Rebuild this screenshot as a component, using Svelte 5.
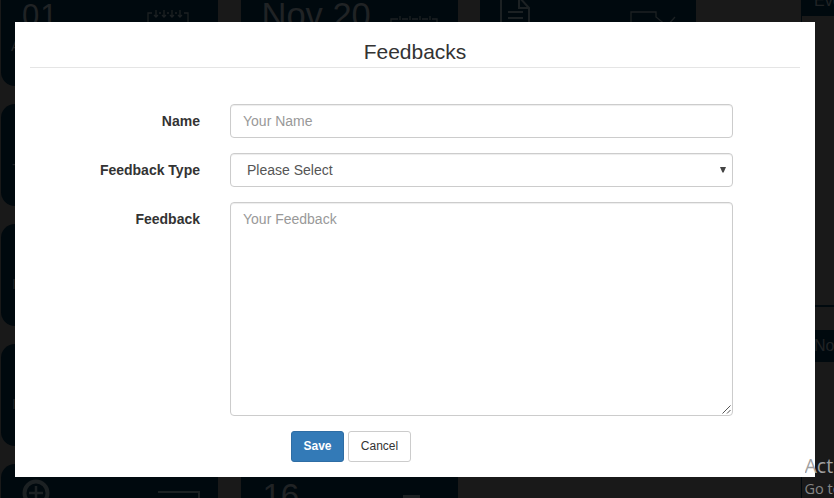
<script>
  let name = $state('');
  let feedback = $state('');
</script>

<div class="screen">
  <div class="dashboard" aria-hidden="true">
    <div class="tiles">
      <div class="tile">
        <span class="num first">01</span>
        <svg class="cal" width="42" height="24" viewBox="0 0 42 24"><path d="M5 3H1v21M37 3h4v21M9 0v7M17 0v7M25 0v7M33 0v7M12 3h2M20 3h2M28 3h2M7 5l2 2 2-2M15 5l2 2 2-2M23 5l2 2 2-2M31 5l2 2 2-2" /></svg>
        <span class="caption">A</span>
      </div>
      <div class="tile">
        <span class="num">Nov 20</span>
        <svg class="cal low" width="48" height="20" viewBox="0 0 48 20"><path d="M1 20V5h7M12 5h6M22 5h6M32 5h6M42 5h5v15M10 2v4M20 2v4M30 2v4M40 2v4" /></svg>
      </div>
      <div class="tile">
        <svg class="doc" width="31" height="34" viewBox="0 0 31 34"><path d="M1 34V1h18l10 11v22M19 1v11h10M8 16h15M8 22h15M8 28h15" stroke-width="2" /></svg>
        <svg class="pen" width="50" height="20" viewBox="0 0 50 20"><path d="M2 20V3h25v5l11 9M38 17l8-9" /></svg>
      </div>
      <div class="tile"><span class="caption mid">-</span></div>
      <div class="tile"></div>
      <div class="tile"></div>
      <div class="tile"><span class="caption mid">I</span></div>
      <div class="tile"></div>
      <div class="tile"></div>
      <div class="tile"><span class="caption mid">I</span></div>
      <div class="tile"></div>
      <div class="tile"></div>
      <div class="tile">
        <svg class="zoom" width="30" height="32" viewBox="0 0 30 32"><circle cx="14" cy="15" r="11.5" stroke-width="4" /><path d="M14 8v14M7 15h14" stroke-width="2.5" /></svg>
        <svg class="box" width="42" height="10" viewBox="0 0 42 10"><path d="M0 1h41v9" stroke-width="2" /></svg>
      </div>
      <div class="tile"><span class="num sixteen">16</span><i class="dash"></i></div>
    </div>
    <div class="side">
      <div class="panel"><div class="head">Eve</div></div>
      <div class="panel second"><div class="head">Nov</div></div>
    </div>
  </div>

  <div class="modal" role="dialog" aria-labelledby="title">
    <h1 id="title">Feedbacks</h1>
    <form onsubmit={(e) => e.preventDefault()}>
      <div class="row">
        <label for="name">Name</label>
        <input id="name" class="control" placeholder="Your Name" bind:value={name} />
      </div>
      <div class="row">
        <label for="type">Feedback Type</label>
        <div class="select">
          <select id="type" class="control"><option>Please Select</option></select>
          <svg width="6" height="6" viewBox="0 0 6 6"><path d="M0 0h6L3.6 5.5H2.4z" /></svg>
        </div>
      </div>
      <div class="row">
        <label for="feedback">Feedback</label>
        <div class="area">
          <textarea id="feedback" class="control" placeholder="Your Feedback" bind:value={feedback}></textarea>
          <svg width="9" height="9" viewBox="0 0 9 9"><path d="M.5 8.5l8-8M5 8.5L8.5 5" /></svg>
        </div>
      </div>
      <div class="actions">
        <button class="save" type="submit">Save</button>
        <button type="button">Cancel</button>
      </div>
    </form>
  </div>

  <div class="watermark"><div class="big">Act</div><div>Go to</div></div>
</div>

<style>
  .screen {
    position: relative;
    height: 498px;
    overflow: hidden;
    background: #191919;
    font: 14px/20px "Liberation Sans", Arial, sans-serif;
    color: #333;
  }
  .screen * { box-sizing: border-box; }
  .dashboard {
    position: absolute;
    inset: 0;
    display: flex;
    overflow: hidden;
    color: #202325;
  }
  .tiles {
    flex: none;
    width: 801px;
    margin-top: -16px;
    padding-left: 1px;
    display: grid;
    grid-template-columns: 217px 217px 216px;
    grid-auto-rows: 102px;
    align-content: start;
    gap: 18px 22.5px;
  }
  .tile {
    position: relative;
    background: #00090e;
    border-radius: 14px;
  }
  .tile svg { position: absolute; fill: none; stroke: #1c2123; stroke-width: 1.3; }
  .num { position: absolute; left: 21px; top: 16px; font-size: 34.5px; line-height: 31px; white-space: nowrap; }
  .num.first { left: 21px; font-size: 31px; letter-spacing: 1px; }
  .num.sixteen { left: 22px; font-size: 33px; }
  .caption { position: absolute; left: 10px; top: 52px; }
  .caption.mid { top: 50px; left: 11px; }
  .tile .cal { left: 146px; top: 26px; }
  .tile .cal.low { left: 149px; top: 30px; }
  .tile .doc { left: 20px; top: 12px; }
  .tile .pen { left: 149px; top: 25px; }
  .tile .zoom { left: 21px; top: 14px; }
  .tile .box { left: 157px; top: 27px; }
  .dash { position: absolute; left: 162px; top: 31px; width: 17px; height: 3px; background: #1c2123; }
  .side { flex: 1; min-width: 0; border-left: 1px solid #00090e; overflow: hidden; }
  .panel { height: 307px; border-bottom: 2px solid #00090e; }
  .panel.second { margin-top: 23px; }
  .head { height: 16px; padding-left: 12px; background: #00090e; font-size: 16px; line-height: 2px; }
  .second .head { height: 32px; line-height: 31px; }
  .modal {
    position: absolute;
    left: 15px;
    top: 22px;
    width: 800px;
    height: 455px;
    padding: 15px 15px 0;
    background: #fff;
  }
  h1 {
    height: 31px;
    margin: 0 0 36px;
    border-bottom: 1px solid #e5e5e5;
    font-size: 21px;
    font-weight: 400;
    line-height: 30px;
    text-align: center;
  }
  .row { display: flex; align-items: flex-start; margin-bottom: 15px; }
  label { width: 170px; margin-right: 30px; padding-top: 7px; text-align: right; font-weight: 700; }
  .control {
    display: block;
    width: 503px;
    height: 34px;
    margin: 0;
    padding: 6px 12px;
    border: 1px solid #ccc;
    border-radius: 4px;
    background: #fff;
    box-shadow: inset 0 1px 1px rgba(0, 0, 0, 0.075);
    font: inherit;
    color: #555;
    outline: 0;
    appearance: none;
  }
  .control::placeholder { color: #999; opacity: 1; }
  select.control { padding-left: 16px; }
  textarea.control { height: 214px; resize: none; }
  .select, .area { position: relative; }
  .select svg { position: absolute; right: 7px; top: 14px; fill: #444; }
  .area svg { position: absolute; right: 2px; bottom: 2px; fill: none; stroke: #555; }
  .actions { display: flex; gap: 4px; padding-left: 261px; }
  button {
    height: 31px;
    width: 63px;
    padding: 0 0 2px;
    border: 1px solid #ccc;
    border-radius: 3px;
    background: #fff;
    color: #333;
    font: 12px/18px "Liberation Sans", Arial, sans-serif;
  }
  .save { width: 53px; background: #337ab7; border-color: #2e6da4; color: #fff; font-weight: 700; }
  .watermark {
    position: absolute;
    left: 804.5px;
    top: 453px;
    width: 30px;
    overflow: hidden;
    white-space: nowrap;
    font: 14.5px/21px "Open Sans", "Noto Sans", sans-serif;
    color: #858585;
  }
  .big { font-size: 19.5px; line-height: 25px; color: #a0a0a0; }
</style>
